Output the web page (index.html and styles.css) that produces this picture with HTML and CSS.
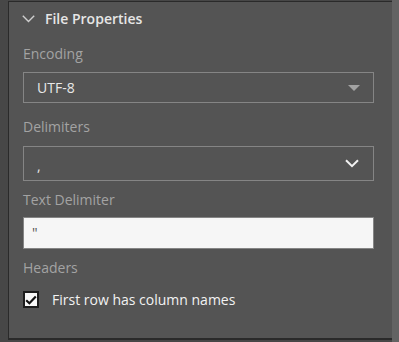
FILE: index.html
```html
<!DOCTYPE html>
<html>
<head>
<meta charset="utf-8">
<link rel="stylesheet" href="styles.css">
</head>
<body>
<div class="frame">
  <div class="gutter"></div>
  <div class="panel">
    <div class="header">
      <svg class="chev" width="13" height="8" viewBox="0 0 13 8"><path d="M0.8 0.8 L6.5 6.5 L12.2 0.8" fill="none" stroke="#cfcfcf" stroke-width="1.4"/></svg>
      <span class="title">File Properties</span>
    </div>
    <div class="label l-enc">Encoding</div>
    <div class="select s-enc">
      <span class="val">UTF-8</span>
      <svg class="tri" width="12" height="6" viewBox="0 0 12 6"><path d="M0 0 H12 L6 6 Z" fill="#a3a3a3"/></svg>
    </div>
    <div class="label l-del">Delimiters</div>
    <div class="select s-del">
      <span class="val">,</span>
      <svg class="dchev" width="14" height="9" viewBox="0 0 14 9"><path d="M1 1.2 L7 7.2 L13 1.2" fill="none" stroke="#f2f2f2" stroke-width="2"/></svg>
    </div>
    <div class="label l-txt">Text Delimiter</div>
    <div class="input">"</div>
    <div class="label l-hdr">Headers</div>
    <div class="check-row">
      <span class="box">
        <svg width="12" height="10" viewBox="0 0 12 10"><path d="M1.2 5.2 L4.4 8.2 L10.8 1.6" fill="none" stroke="#111" stroke-width="2.2"/></svg>
      </span>
      <span class="check-text">First row has column names</span>
    </div>
  </div>
  <div class="scroll"></div>
  <div class="sep"></div>
  <div class="rest"></div>
</div>
</body>
</html>
```
FILE: styles.css
```css
html, body {
  margin: 0;
  padding: 0;
  background: #474747;
  width: 399px;
  height: 342px;
  overflow: hidden;
  font-family: "Open Sans", "Noto Sans", sans-serif;
  font-size: 14px;
}
.frame {
  display: flex;
  height: 342px;
}
.gutter {
  width: 8px;
  flex: none;
}
.panel {
  width: 369px;
  flex: none;
  margin-top: 1px;
  height: 336px;
  background: #545454;
  border-left: 1px solid #2a2a2a;
  border-top: 1px solid #2a2a2a;
  border-bottom: 2px solid #2a2a2a;
  padding: 7px 0 0 14px;
  box-sizing: content-box;
  display: flex;
  flex-direction: column;
  height: 329px;
}
.scroll {
  width: 8px;
  flex: none;
  background: #636363;
}
.sep {
  width: 2px;
  flex: none;
  background: #3e3e3e;
}
.rest {
  flex: 1;
  background: #474747;
}
.header {
  display: flex;
  align-items: center;
  height: 20px;
  line-height: 20px;
}
.chev {
  margin-left: -1px;
  margin-top: -1px;
}
.title {
  margin-left: 10px;
  font-weight: 600;
  color: #e6e6e6;
}
.label {
  line-height: 20px;
  color: #a3a3a3;
}
.l-enc { margin-top: 15px; }
.l-del { margin-top: 14px; }
.l-txt { margin-top: 9px; }
.l-hdr { margin-top: 9px; }
.select {
  width: 351px;
  box-sizing: border-box;
  border: 1px solid #858585;
  display: flex;
  align-items: center;
  justify-content: space-between;
  padding: 0 13px 0 13px;
  color: #e8e8e8;
}
.s-enc {
  margin-top: 8px;
  height: 31px;
}
.s-del {
  margin-top: 9px;
  height: 35px;
}
.s-del .val {
  margin-top: 4px;
}
.tri { margin-top: 1px; }
.dchev { margin-top: 0; margin-right: 1px; }
.input {
  margin-top: 7px;
  width: 351px;
  height: 32px;
  box-sizing: border-box;
  background: #f6f6f6;
  border: 1px solid #858585;
  padding: 0 8px;
  line-height: 30px;
  color: #555;
}
.check-row {
  margin-top: 13px;
  display: flex;
  align-items: center;
  height: 17px;
}
.box {
  width: 16px;
  height: 17px;
  box-sizing: border-box;
  border: 2px solid #1c1c1c;
  background: #f8f8f8;
  display: flex;
  align-items: center;
  justify-content: center;
}
.check-text {
  margin-left: 13px;
  color: #f2f2f2;
  line-height: 17px;
}
```
